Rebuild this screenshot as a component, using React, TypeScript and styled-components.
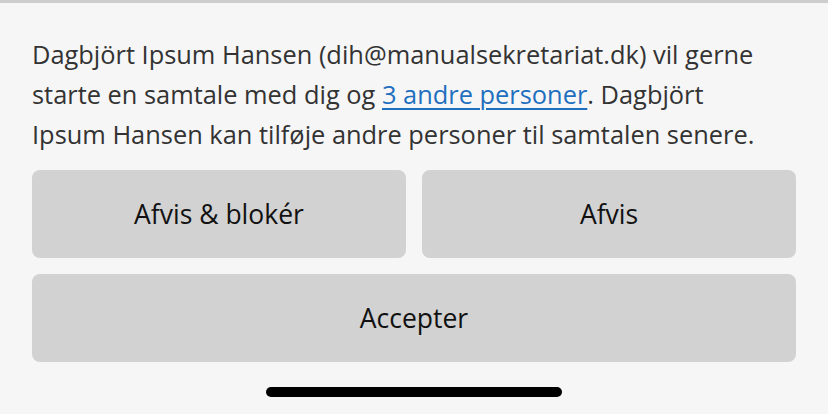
import React from "react";
import styled, { createGlobalStyle } from "styled-components";

const Global = createGlobalStyle`
  html, body { margin: 0; padding: 0; background: #f6f6f6; }
  body { font-family: "Open Sans", "Noto Sans", sans-serif; }
`;

const Page = styled.div`
  width: 828px;
  height: 414px;
  box-sizing: border-box;
  border-top: 3px solid #cdcdcd;
  background: #f6f6f6;
  padding: 31px 32px 0;
  display: flex;
  flex-direction: column;
  overflow: hidden;
`;

const Message = styled.p`
  margin: 0;
  font-size: 25.4px;
  line-height: 40px;
  color: #333333;
`;

const Link = styled.a`
  color: #1f6fbf;
  text-decoration: underline;
  text-underline-offset: 4px;
  text-decoration-thickness: 1.5px;
`;

const Actions = styled.div`
  margin-top: 16px;
  display: grid;
  grid-template-columns: 1fr 1fr;
  gap: 16px;
`;

const Button = styled.button<{ $wide?: boolean }>`
  grid-column: ${(p) => (p.$wide ? "1 / -1" : "auto")};
  height: 88px;
  border: none;
  border-radius: 8px;
  background: #d2d2d2;
  color: #111111;
  font-family: "Open Sans", "Noto Sans", sans-serif;
  font-size: 26.5px;
  padding: 0;
`;

const HomeBar = styled.div`
  align-self: center;
  margin-top: 25px;
  width: 296px;
  height: 10px;
  border-radius: 5px;
  background: #000;
`;

export default function App() {
  return (
    <>
      <Global />
      <Page>
        <Message>
          Dagbjört Ipsum Hansen (dih@manualsekretariat.dk) vil gerne starte en
          samtale med dig og <Link href="#">3 andre personer</Link>. Dagbjört
          <br />
          Ipsum Hansen kan tilføje andre personer til samtalen senere.
        </Message>
        <Actions>
          <Button>Afvis &amp; blokér</Button>
          <Button>Afvis</Button>
          <Button $wide>Accepter</Button>
        </Actions>
        <HomeBar />
      </Page>
    </>
  );
}
